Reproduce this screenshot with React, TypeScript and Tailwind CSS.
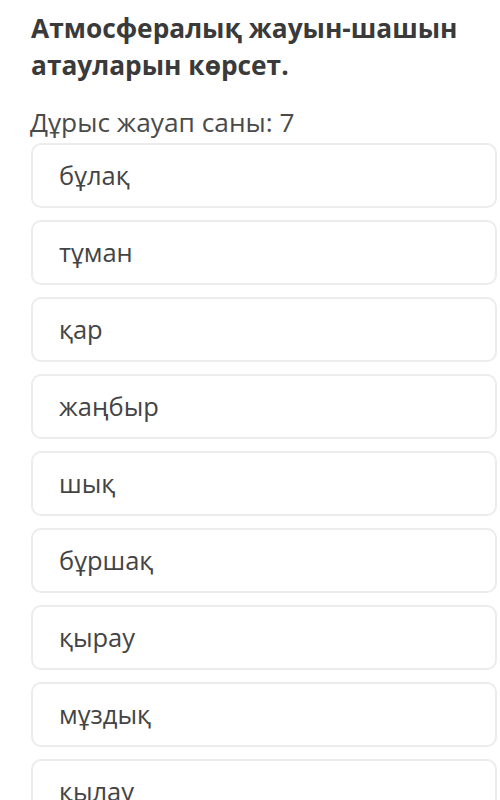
import React from "react";

const items = ["бұлақ", "тұман", "қар", "жаңбыр", "шық", "бұршақ", "қырау", "мұздық", "қылау"];

export default function App() {
  return (
    <div
      className="w-[500px] h-[800px] overflow-hidden bg-white pl-[31px] pr-[3px]"
      style={{ fontFamily: '"Open Sans", "Noto Sans", sans-serif' }}
    >
      <h1 className="pt-[10px] text-[26.3px] leading-[37px] font-bold text-[#3a3a3a]">
        Атмосфералық жауын-шашын атауларын көрсет.
      </h1>
      <div className="mt-[21px] text-[26.3px] leading-[34px] text-[#4a4a4a] -ml-[1px]">Дұрыс жауап саны: 7</div>
      <div className="mt-[4px] flex flex-col gap-[12px]">
        {items.map((t) => (
          <div
            key={t}
            className="h-[65px] shrink-0 flex items-center rounded-[10px] border-2 border-[#ececec] pl-[26px] text-[25.5px] text-[#444444]"
          >
            {t}
          </div>
        ))}
      </div>
    </div>
  );
}
